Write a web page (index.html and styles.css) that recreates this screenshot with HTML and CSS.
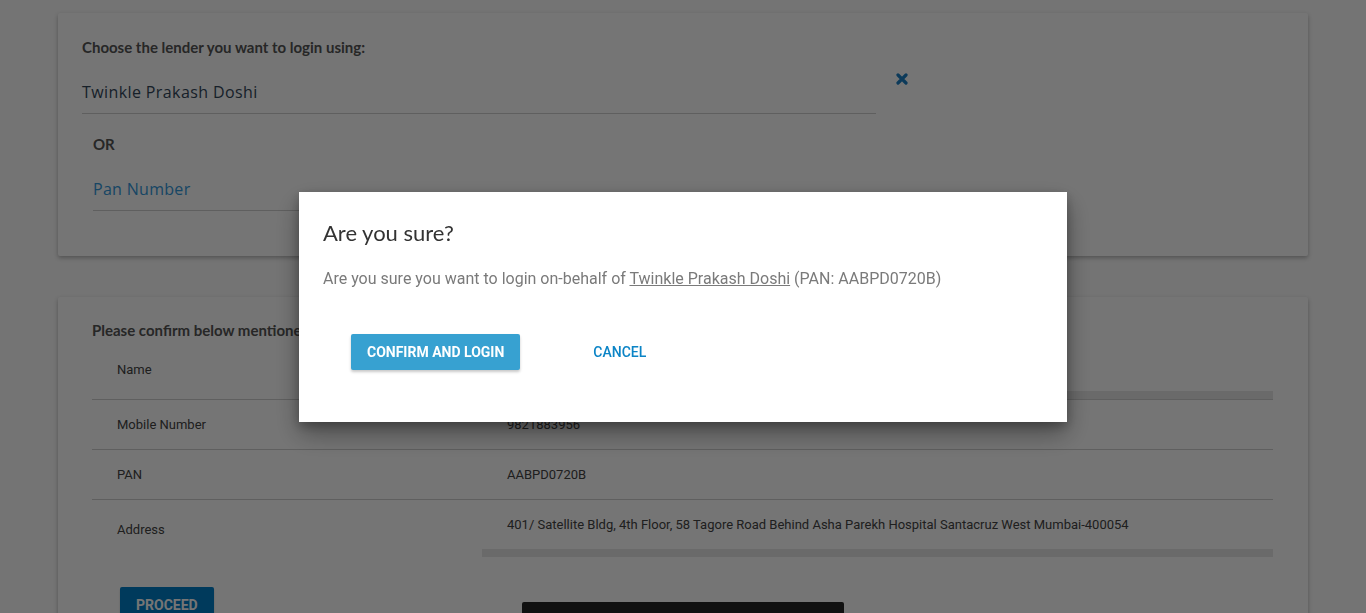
FILE: index.html
```html
<!DOCTYPE html>
<html lang="en">
<head>
<meta charset="utf-8">
<title>Login on behalf</title>
<link rel="stylesheet" href="styles.css">
</head>
<body>
<main class="page">
  <section class="card lender-card">
    <h3 class="card-title">Choose the lender you want to login using:</h3>
    <div class="lender-row">
      <div class="field field-lender">Twinkle Prakash Doshi</div>
      <button class="clear-btn" aria-label="Clear">
        <svg width="12" height="12" viewBox="0 0 12 12"><path d="M2 2 L10 10 M10 2 L2 10" stroke="currentColor" stroke-width="3.2" stroke-linecap="round"/></svg>
      </button>
    </div>
    <div class="or-block">
      <div class="or">OR</div>
      <div class="field field-pan">Pan Number</div>
    </div>
  </section>

  <section class="card confirm-card">
    <h3 class="card-title">Please confirm below mentioned details</h3>
    <div class="details">
      <div class="row row-name">
        <div class="label">Name</div>
        <div class="value scroll"><div class="value-text">Twinkle Prakash Doshi</div><div class="scrollbar"></div></div>
      </div>
      <div class="row">
        <div class="label">Mobile Number</div>
        <div class="value"><div class="value-text">9821883956</div></div>
      </div>
      <div class="row">
        <div class="label">PAN</div>
        <div class="value"><div class="value-text">AABPD0720B</div></div>
      </div>
      <div class="row last">
        <div class="label">Address</div>
        <div class="value scroll"><div class="value-text">401/ Satellite Bldg, 4th Floor, 58 Tagore Road Behind Asha Parekh Hospital Santacruz West Mumbai-400054</div><div class="scrollbar"></div></div>
      </div>
    </div>
    <div class="card-actions">
      <button class="proceed">PROCEED</button>
    </div>
  </section>
</main>

<div class="snackbar"></div>
<div class="backdrop"></div>

<div class="modal" role="dialog">
  <h2 class="modal-title">Are you sure?</h2>
  <p class="modal-body">Are you sure you want to login on-behalf of <a class="name-link">Twinkle Prakash Doshi</a> (PAN: AABPD0720B)</p>
  <div class="modal-actions">
    <button class="btn-confirm">CONFIRM AND LOGIN</button>
    <button class="btn-cancel">CANCEL</button>
  </div>
</div>
</body>
</html>
```

FILE: styles.css
```css
* { box-sizing: border-box; }

html, body {
  margin: 0;
  padding: 0;
  height: 100%;
  overflow: hidden;
}

html {
  background: #fcfcfc;
}

body {
  background: #fcfcfc;
  font-family: Roboto, "Liberation Sans", sans-serif;
  color: #444;
}

.page {
  position: relative;
  width: 1250px;
  margin: 0 auto;
  padding-top: 13px;
}

.card {
  background: #fff;
  box-shadow: 0 2px 4px rgba(0, 0, 0, 0.28);
  border-radius: 2px;
}

.card-title {
  margin: 0;
  font-family: Lato, "Liberation Sans", sans-serif;
  font-weight: 700;
  font-size: 15px;
  line-height: 18px;
  color: #555;
}

.lender-card {
  padding: 25px 24px 45px;
}

.lender-card .card-title {
  margin-bottom: 17px;
}

.lender-row {
  display: flex;
  align-items: flex-start;
}

.field {
  font-family: "Open Sans", "Noto Sans", sans-serif;
  font-size: 16px;
  line-height: 22px;
  padding: 8px 0 10px;
  border-bottom: 1px solid #cfcfcf;
}

.field-lender {
  width: 794px;
  color: #34475a;
  letter-spacing: 0.4px;
}

.clear-btn {
  margin: 0 0 0 20px;
  padding: 0;
  border: 0;
  background: none;
  width: 12px;
  height: 12px;
  color: #1b7fc4;
  display: flex;
}

.or-block {
  padding-left: 11px;
}

.or {
  margin-top: 21px;
  margin-bottom: 17px;
  font-family: Lato, "Liberation Sans", sans-serif;
  font-weight: 700;
  font-size: 15px;
  line-height: 18px;
  color: #555;
}

.field-pan {
  width: 783px;
  color: #3498db;
  letter-spacing: 0.3px;
}

.confirm-card {
  margin-top: 41px;
  padding: 24px 35px 40px 34px;
}

.confirm-card .card-title {
  margin-bottom: 1px;
}

.details {
  display: flex;
  flex-direction: column;
}

.row {
  display: grid;
  grid-template-columns: 390px 1fr;
  border-bottom: 1px solid #d0d0d0;
  font-size: 13px;
  color: #444;
}

.row.last {
  border-bottom: 0;
}

.label {
  align-self: center;
  padding: 0 25px;
  line-height: 15px;
}

.value-text {
  padding: 17px 25px;
  line-height: 15px;
  white-space: nowrap;
}

.row-name .value-text {
  padding-top: 18px;
  padding-bottom: 18px;
}

.row.last .label {
  padding-top: 1px;
}

.scrollbar {
  height: 8px;
  background: #e8e8e8;
}

.card-actions {
  padding: 30px 0 0 28px;
}

.proceed {
  height: 36px;
  padding: 0 16px;
  border: 0;
  border-radius: 2px;
  background: #007ec8;
  color: #fff;
  font-family: Roboto, "Liberation Sans", sans-serif;
  font-weight: 700;
  font-size: 14px;
  box-shadow: 0 2px 2px rgba(0, 0, 0, 0.2);
}

.snackbar {
  position: fixed;
  left: 50%;
  bottom: -37px;
  width: 322px;
  height: 48px;
  margin-left: -161px;
  background: #262626;
  border-radius: 2px;
}

.backdrop {
  position: fixed;
  inset: 0;
  background: rgba(0, 0, 0, 0.54);
}

.modal {
  position: fixed;
  top: 192px;
  left: 50%;
  width: 768px;
  margin-left: -384px;
  background: #fff;
  padding: 26px 24px 52px;
  box-shadow: 0 12px 24px rgba(0, 0, 0, 0.35), 0 4px 10px rgba(0, 0, 0, 0.25);
}

.modal-title {
  margin: 0 0 19px;
  font-family: Lato, "Liberation Sans", sans-serif;
  font-weight: 400;
  font-size: 22px;
  line-height: 30px;
  color: #333;
}

.modal-body {
  margin: 0 0 43px;
  font-family: Roboto, "Liberation Sans", sans-serif;
  font-size: 16px;
  line-height: 24px;
  color: #7a7a7a;
}

.name-link {
  color: #7a7a7a;
  text-decoration: underline;
}

.modal-actions {
  display: flex;
  align-items: center;
  padding-left: 28px;
}

.btn-confirm {
  height: 36px;
  padding: 0 16px;
  border: 0;
  border-radius: 2px;
  background: #37a1d1;
  color: #fff;
  font-family: Roboto, "Liberation Sans", sans-serif;
  font-weight: 700;
  font-size: 14px;
  box-shadow: 0 2px 3px rgba(0, 0, 0, 0.22);
}

.btn-cancel {
  margin-left: 57px;
  height: 36px;
  padding: 0 16px;
  border: 0;
  background: none;
  color: #0b84c6;
  font-family: Roboto, "Liberation Sans", sans-serif;
  font-weight: 500;
  font-size: 14px;
}
```
